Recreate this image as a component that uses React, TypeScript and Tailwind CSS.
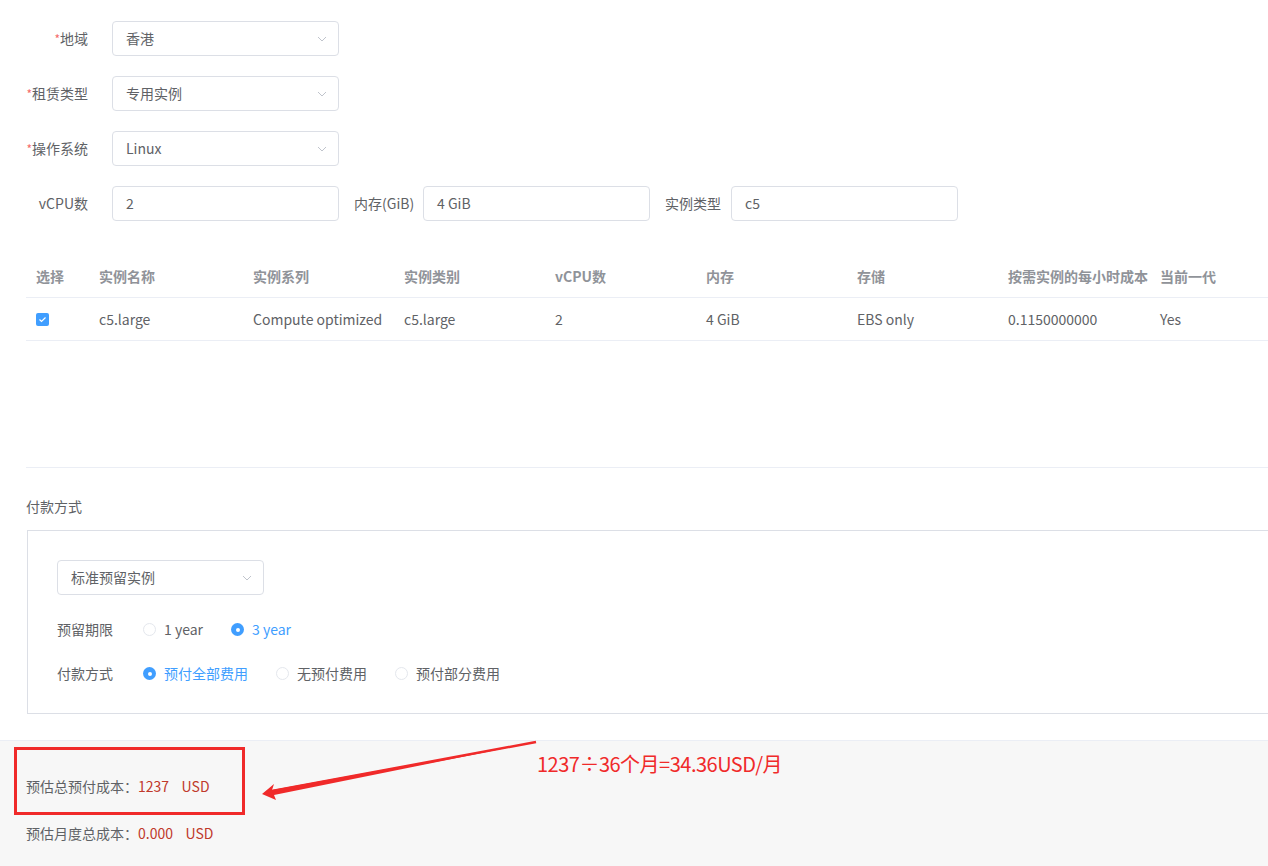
import React from "react";

const F = { fontFamily: '"Noto Sans CJK SC", "Liberation Sans", sans-serif' };

function Chevron() {
  return (
    <svg width="12" height="12" viewBox="0 0 12 12" className="text-[#c0c4cc]">
      <path d="M2 4l4 4 4-4" fill="none" stroke="currentColor" strokeWidth="1" />
    </svg>
  );
}

function Select({ v, w = "w-[227px]" }: { v: string; w?: string }) {
  return (
    <div className={`${w} h-[35px] border border-[#dcdfe6] rounded flex items-center justify-between pl-[13px] pr-[10px] text-[14px] text-[#606266]`}>
      <span>{v}</span>
      <Chevron />
    </div>
  );
}

function Label({ t, req }: { t: string; req?: boolean }) {
  return (
    <div className="w-[112px] pr-[24px] text-right text-[14px] text-[#606266]">
      {req && <span className="text-[#f56c6c] text-[12px]">*</span>}
      {t}
    </div>
  );
}

function Input({ v }: { v: string }) {
  return (
    <div className="w-[227px] h-[35px] border border-[#dcdfe6] rounded flex items-center pl-[13px] text-[14px] text-[#606266]">{v}</div>
  );
}

function Radio({ on, t }: { on?: boolean; t: string }) {
  return (
    <div className={`flex items-center gap-[8px] text-[14px] ${on ? "text-[#409eff]" : "text-[#606266]"}`}>
      {on ? (
        <span className="w-[13px] h-[13px] rounded-full bg-[#409eff] flex items-center justify-center">
          <span className="w-[4px] h-[4px] rounded-full bg-white" />
        </span>
      ) : (
        <span className="w-[13px] h-[13px] rounded-full border border-[#e4e7ed]" />
      )}
      {t}
    </div>
  );
}

const cols = [
  ["选择", 63],
  ["实例名称", 154],
  ["实例系列", 151],
  ["实例类别", 151],
  ["vCPU数", 151],
  ["内存", 151],
  ["存储", 151],
  ["按需实例的每小时成本", 152],
  ["当前一代", 118],
] as const;
const row = ["", "c5.large", "Compute optimized", "c5.large", "2", "4 GiB", "EBS only", "0.1150000000", "Yes"];

export default function App() {
  return (
    <div style={F} className="w-[1268px] h-[866px] bg-white relative overflow-hidden">
      <div className="pt-[21px] flex flex-col gap-[20px]">
        <div className="flex items-center"><Label t="地域" req /><Select v="香港" /></div>
        <div className="flex items-center"><Label t="租赁类型" req /><Select v="专用实例" /></div>
        <div className="flex items-center"><Label t="操作系统" req /><Select v="Linux" /></div>
        <div className="flex items-center">
          <Label t="vCPU数" />
          <Input v="2" />
          <span className="ml-[15px] w-[69px] text-[14px] text-[#606266]">内存(GiB)</span>
          <Input v="4 GiB" />
          <span className="ml-[15px] w-[66px] text-[14px] text-[#606266]">实例类型</span>
          <Input v="c5" />
        </div>
      </div>

      <div className="ml-[26px] mt-[34px]">
        <div className="flex h-[43px] items-center border-b border-[#ebeef5] text-[14px] font-bold text-[#909399]">
          {cols.map(([c, w]) => (
            <div key={c} style={{ width: w }} className="pl-[10px]">{c}</div>
          ))}
        </div>
        <div className="flex h-[43px] items-center border-b border-[#ebeef5] text-[14px] text-[#606266]">
          {cols.map(([c, w], i) => (
            <div key={c} style={{ width: w }} className="pl-[10px]">
              {i === 0 ? (
                <span className="w-[13px] h-[13px] rounded-[2px] bg-[#409eff] flex items-center justify-center">
                  <svg width="9" height="9" viewBox="0 0 9 9"><path d="M1.5 4.5l2 2 4-4" fill="none" stroke="white" strokeWidth="1.2" /></svg>
                </span>
              ) : row[i]}
            </div>
          ))}
        </div>
        <div className="h-[127px] border-b border-[#ebeef5]" />
      </div>

      <div className="ml-[26px] mt-[28px] text-[14px] text-[#606266]">付款方式</div>
      <div className="ml-[27px] mt-[13px] h-[184px] border border-[#dcdfe6] border-r-0 pl-[29px] pt-[29px]">
        <Select v="标准预留实例" w="w-[207px]" />
        <div className="flex items-center mt-[24px] gap-[28px]">
          <span className="text-[14px] text-[#606266] w-[58px]">预留期限</span>
          <Radio t="1 year" />
          <Radio on t="3 year" />
        </div>
        <div className="flex items-center mt-[23px] gap-[28px]">
          <span className="text-[14px] text-[#606266] w-[58px]">付款方式</span>
          <Radio on t="预付全部费用" />
          <Radio t="无预付费用" />
          <Radio t="预付部分费用" />
        </div>
      </div>

      <div className="absolute left-0 top-[740px] w-full h-[126px] bg-[#f7f7f7] border-t border-[#ebeef5] pl-[26px] text-[14px] text-[#606266]">
        <div className="mt-[35px]">预估总预付成本：<span className="text-[#c0392b]">1237&nbsp;&nbsp;&nbsp;&nbsp;USD</span></div>
        <div className="mt-[26px]">预估月度总成本：<span className="text-[#c0392b]">0.000&nbsp;&nbsp;&nbsp;&nbsp;USD</span></div>
      </div>
      <div className="absolute left-[14px] top-[747px] w-[231px] h-[68px] border-[3px] border-[#f02a2a]" />
      <svg className="absolute left-0 top-0" width="1268" height="866">
        <polygon points="536,742 272,790 274,784 262,794 276,800 274,795" fill="#f02a2a" />
        <path d="M536 742 L272 791" stroke="#f02a2a" strokeWidth="2.5" />
      </svg>
      <div className="absolute left-[537px] top-[749px] text-[20px] text-[#f02a2a] tracking-[-0.5px]" style={{ fontFamily: '"Liberation Sans Narrow", "Noto Sans CJK SC", sans-serif' }}>
        1237÷36个月=34.36USD/月
      </div>
    </div>
  );
}
